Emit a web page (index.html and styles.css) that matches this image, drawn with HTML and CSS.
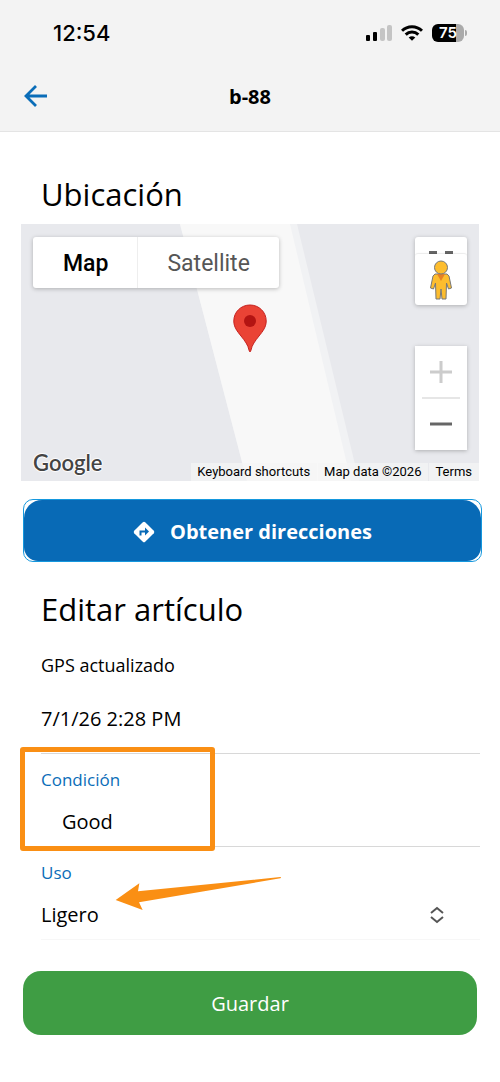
FILE: index.html
```html
<!DOCTYPE html>
<html lang="es">
<head>
    <meta charset="UTF-8">
    <meta name="viewport" content="width=device-width, initial-scale=1.0">
    <title>b-88</title>
    <link rel="stylesheet" href="styles.css">
</head>
<body>
    <header class="header">
        <div class="status-bar">
            <span class="time">12:54</span>
            <div class="status-icons">
                <svg width="26" height="18" viewBox="0 0 26 18">
                    <rect x="0" y="11" width="4" height="6" rx="1"/>
                    <rect x="7" y="8" width="4" height="9" rx="1"/>
                    <rect x="14" y="4" width="5" height="13" rx="2" fill="#c4c4c4"/>
                    <rect x="21" y="1" width="5" height="16" rx="2" fill="#c4c4c4"/>
                </svg>
                <svg width="22" height="18" viewBox="0 0 22 18" fill="none" stroke="#000" stroke-width="3">
                    <path d="M1 6.800C6.500 1.300 15.500 1.300 21 6.800"/>
                    <path d="M4.700 10.600C8.200 7.200 13.800 7.200 17.300 10.600"/>
                    <path d="M11 16.800L7.700 13.500C9.600 11.700 12.400 11.700 14.300 13.500Z" fill="#000" stroke="none"/>
                </svg>
                <div class="battery"><span class="battery-level">75</span></div>
            </div>
        </div>
        <div class="toolbar">
            <button class="back" type="button" aria-label="Volver">
                <svg width="24" height="22" viewBox="0 0 24 22" fill="none" stroke="#0a6db8" stroke-width="2.800">
                    <path d="M23 11H3M12 1L2 11L12 21"/>
                </svg>
            </button>
            <h1>b-88</h1>
        </div>
    </header>

    <main>
        <h2>Ubicación</h2>

        <div class="map">
            <svg class="map-road" viewBox="0 0 458 257" preserveAspectRatio="none">
                <path d="M159 0H276L338 257H226Z" fill="#f1f2f4"/>
                <path d="M159 0H269L330 257H226Z" fill="#f8f8f8"/>
            </svg>

            <div class="map-type">
                <button type="button" class="active">Map</button>
                <button type="button">Satellite</button>
            </div>

            <svg class="marker" width="34" height="49" viewBox="0 0 34 49">
                <path d="M17 1C8 1 .8 8 .8 17C.8 23 4 27 8 32C12 37 15 41 16 46Q16.500 48 17 48Q17.500 48 18 46C19 41 22 37 26 32C30 27 33.200 23 33.200 17C33.200 8 26 1 17 1Z" fill="#ea4335" stroke="#c5221f"/>
                <circle cx="17" cy="17" r="6" fill="#b31412"/>
            </svg>

            <div class="map-controls">
                <div class="street-view">
                    <button type="button" class="fullscreen" aria-label="Pantalla completa"></button>
                    <button type="button" class="pegman" aria-label="Street View">
                        <svg width="24" height="40" viewBox="0 0 24 40" fill="#fdbd2e" stroke="#777" stroke-width="1">
                            <path d="M6 14H18L20 16L22.500 28L19.500 29L17.500 23L17 39H13L12 29L11 39H7L6.500 23L4.500 29L1.500 28L4 16Z"/>
                            <path d="M8 14H16L12 21Z" fill="#e58026" stroke="none"/>
                            <circle cx="12" cy="7.500" r="6.500"/>
                        </svg>
                    </button>
                </div>
                <div class="zoom">
                    <button type="button" aria-label="Acercar">
                        <svg width="22" height="22" viewBox="0 0 22 22"><path d="M0 11H22M11 0V22" stroke="#ccc" stroke-width="3"/></svg>
                    </button>
                    <button type="button" aria-label="Alejar">
                        <svg width="22" height="22" viewBox="0 0 22 22"><path d="M0 11H22" stroke="#666" stroke-width="3"/></svg>
                    </button>
                </div>
            </div>

            <span class="google">Google</span>
            <div class="map-links">
                <a href="#">Keyboard shortcuts</a>
                <span>Map data ©2026</span>
                <a href="#">Terms</a>
            </div>
        </div>

        <button type="button" class="directions">
            <span>
                <svg width="22" height="22" viewBox="0 0 22 22">
                    <path d="M9.800 1.200Q11 .2 12.200 1.200L20.800 9.800Q21.800 11 20.800 12.200L12.200 20.800Q11 21.800 9.800 20.800L1.200 12.200Q.2 11 1.200 9.800Z" fill="#fff"/>
                    <path d="M7.500 14.500V10.500H13" fill="none" stroke="#086ab6" stroke-width="2"/>
                    <path d="M12 6.500L16 10.500L12 14.500Z" fill="#086ab6"/>
                </svg>
                Obtener direcciones
            </span>
        </button>

        <h2>Editar artículo</h2>

        <form>
            <div class="field updated">
                <span class="title">GPS actualizado</span>
                <span>7/1/26 2:28 PM</span>
            </div>
            <div class="field">
                <label for="condicion">Condición</label>
                <input type="text" id="condicion" class="indent" value="Good">
                <div class="highlight"></div>
            </div>
            <div class="field last">
                <label for="uso">Uso</label>
                <div class="select-row">
                    <select id="uso">
                        <option>Ligero</option>
                    </select>
                    <svg width="14" height="18" viewBox="0 0 14 18" fill="none" stroke="#555" stroke-width="2">
                        <path d="M1 7L7 2L13 7M1 11L7 16L13 11"/>
                    </svg>
                </div>
                <!-- flecha -->
                <svg class="arrow" width="167" height="36" viewBox="345 405 501 108">
                    <path d="M347 480L418 430L414 454L841 411Q845 413 841 415L417 487L428 510Z" fill="#fa8f14"/>
                </svg>
            </div>
            <button type="submit" class="save">Guardar</button>
        </form>
    </main>
</body>
</html>
```
FILE: styles.css
```css
* {
    box-sizing: border-box;
}

body {
    margin: 0;
    background-color: #fff;
    color: #000;
    font-family: "Open Sans", "Noto Sans", sans-serif;
    font-size: 20px;
    line-height: 28px;
}

button, input, select {
    margin: 0;
    padding: 0;
    border: none;
    background: none;
    color: inherit;
    font: inherit;
}

button {
    cursor: pointer;
}

svg {
    display: block;
    flex-shrink: 0;
}

/* Cabecera */
.header {
    background-color: #f3f3f3;
    border-bottom: 1px solid #e4e4e4;
}

.status-bar {
    display: flex;
    justify-content: space-between;
    align-items: center;
    height: 66px;
    padding: 0 36px 0 53px;
}

.time {
    font: 500 22px/28px Inter, sans-serif;
}

.status-icons {
    display: flex;
    align-items: center;
    gap: 9px;
}

.battery {
    position: relative;
    width: 32px;
    height: 18px;
    border-radius: 6px;
    background: linear-gradient(to right, #000 75%, #aaa 75%);
}

.battery::after {
    content: "";
    position: absolute;
    left: 33px;
    top: 6px;
    width: 2px;
    height: 6px;
    border-radius: 0 2px 2px 0;
    background-color: #aaa;
}

.battery-level {
    display: block;
    color: #fff;
    font: 600 15px/18px Inter, sans-serif;
    text-align: center;
}

.toolbar {
    display: grid;
    grid-template-columns: 24px 1fr 24px;
    align-items: center;
    height: 65px;
    padding: 0 24px 5px;
}

h1 {
    margin: 0;
    padding-top: 1px;
    font-size: 20px;
    font-weight: 700;
    text-align: center;
}

main {
    padding: 42px 20px 47px;
}

h2 {
    margin: 0 21px;
    font-size: 31px;
    font-weight: 400;
    line-height: 40px;
}

/* Mapa */
.map {
    position: relative;
    height: 257px;
    margin: 10px 1px 18px;
    background-color: #e8e9ed;
    font-family: Roboto, sans-serif;
    overflow: hidden;
}

.map-road {
    width: 100%;
    height: 100%;
}

.map-type {
    position: absolute;
    left: 12px;
    top: 13px;
    display: flex;
    border-radius: 3px;
    background-color: #fff;
    box-shadow: 0 1px 4px rgba(0, 0, 0, 0.25);
}

.map-type button {
    height: 51px;
    padding: 2px 29px 0;
    color: #565656;
    font-size: 23px;
}

.map-type .active {
    padding-left: 30px;
    border-right: 1px solid #eee;
    color: #000;
    font-weight: 500;
}

.marker {
    position: absolute;
    left: calc(50% - 17px);
    top: 80px;
}

.map-controls {
    position: absolute;
    right: 12px;
    top: 13px;
    display: flex;
    flex-direction: column;
    gap: 41px;
    width: 52px;
}

.street-view, .zoom {
    display: flex;
    flex-direction: column;
    border-radius: 3px;
    background-color: #fff;
    box-shadow: 0 1px 4px rgba(0, 0, 0, 0.25);
}

.fullscreen {
    height: 17px;
    background: linear-gradient(#666, #666) 14px 14px / 8px 3px no-repeat,
        linear-gradient(#666, #666) 30px 14px / 8px 3px no-repeat;
}

.pegman, .zoom button {
    display: flex;
    align-items: center;
    justify-content: center;
    height: 51px;
}

.pegman {
    border-radius: 3px;
    box-shadow: 0 -1px 1px rgba(0, 0, 0, 0.08);
}

.zoom {
    border-radius: 0;
}

.zoom button {
    height: 52px;
}

.zoom button + button::before {
    content: "";
    position: absolute;
    left: 7px;
    right: 7px;
    bottom: 51px;
    height: 2px;
    background-color: #e6e6e6;
}

.google {
    position: absolute;
    left: 12px;
    bottom: 3px;
    color: #444;
    font: 600 22px/30px Lato, sans-serif;
    text-shadow: 1px 0 1px #fff, -1px 0 1px #fff, 0 1px 1px #fff, 0 -1px 1px #fff;
}

.map-links {
    position: absolute;
    right: 0;
    bottom: 0;
    display: flex;
    gap: 1px;
    font-size: 13px;
    line-height: 18px;
}

.map-links a, .map-links span {
    padding: 0 7px 0 6px;
    background-color: rgba(245, 245, 245, 0.7);
    color: #000;
    text-decoration: none;
}

/* Botones */
.directions {
    display: block;
    width: calc(100% - 1px);
    margin: 0 0 27px 3px;
    border: 1px solid #1598de;
    border-radius: 10px;
    color: #fff;
    font-weight: 700;
}

.directions span {
    display: flex;
    align-items: center;
    justify-content: center;
    gap: 15px;
    height: 61px;
    padding-top: 2px;
    border-radius: 18px 18px 14px 14px;
    background-color: #086ab6;
}

.save {
    display: block;
    width: calc(100% - 6px);
    height: 64px;
    margin: 31px 3px 0;
    padding-top: 2px;
    border-radius: 18px;
    background-color: #3f9d44;
    color: #fff;
}

/* Formulario */
.field {
    position: relative;
    display: flex;
    flex-direction: column;
    gap: 16px;
    margin-left: 21px;
    padding: 14px 0 10px;
    border-bottom: 1px solid #d8d8d8;
}

.field label {
    color: #0a6db8;
    font-size: 17px;
    line-height: 24px;
}

.updated {
    gap: 28px;
    padding: 24px 0 20px;
}

.title {
    font-size: 18px;
    line-height: 24px;
}

.last {
    border-color: #f7f7f7;
}

.field input, .field select {
    width: 100%;
    height: 28px;
    appearance: none;
}

.field .indent {
    padding-left: 21px;
}

.select-row {
    display: flex;
    align-items: center;
    padding-right: 36px;
}

/* Marcas sobre el formulario */
.highlight {
    position: absolute;
    left: -21px;
    top: -7px;
    width: 195px;
    height: 104px;
    border: 5px solid #fa8f14;
    border-radius: 3px;
    z-index: 1;
    pointer-events: none;
}

.arrow {
    position: absolute;
    left: 74px;
    top: 28px;
    pointer-events: none;
}
```
